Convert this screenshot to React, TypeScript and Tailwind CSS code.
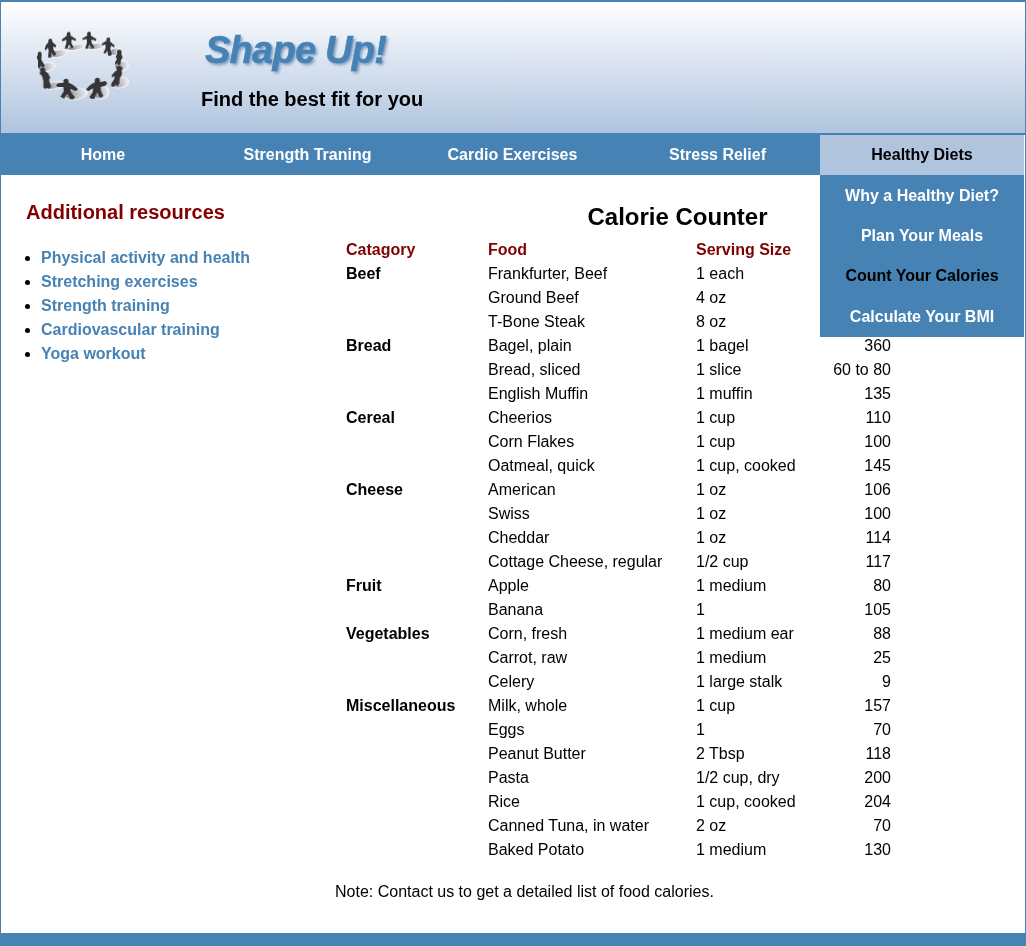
type Row = [string, string, string, string];

const rows: Row[] = [
  ["Beef", "Frankfurter, Beef", "1 each", ""],
  ["", "Ground Beef", "4 oz", ""],
  ["", "T-Bone Steak", "8 oz", ""],
  ["Bread", "Bagel, plain", "1 bagel", "360"],
  ["", "Bread, sliced", "1 slice", "60 to 80"],
  ["", "English Muffin", "1 muffin", "135"],
  ["Cereal", "Cheerios", "1 cup", "110"],
  ["", "Corn Flakes", "1 cup", "100"],
  ["", "Oatmeal, quick", "1 cup, cooked", "145"],
  ["Cheese", "American", "1 oz", "106"],
  ["", "Swiss", "1 oz", "100"],
  ["", "Cheddar", "1 oz", "114"],
  ["", "Cottage Cheese, regular", "1/2 cup", "117"],
  ["Fruit", "Apple", "1 medium", "80"],
  ["", "Banana", "1", "105"],
  ["Vegetables", "Corn, fresh", "1 medium ear", "88"],
  ["", "Carrot, raw", "1 medium", "25"],
  ["", "Celery", "1 large stalk", "9"],
  ["Miscellaneous", "Milk, whole", "1 cup", "157"],
  ["", "Eggs", "1", "70"],
  ["", "Peanut Butter", "2 Tbsp", "118"],
  ["", "Pasta", "1/2 cup, dry", "200"],
  ["", "Rice", "1 cup, cooked", "204"],
  ["", "Canned Tuna, in water", "2 oz", "70"],
  ["", "Baked Potato", "1 medium", "130"],
];

const resources = [
  "Physical activity and health",
  "Stretching exercises",
  "Strength training",
  "Cardiovascular training",
  "Yoga workout",
];

const navItems = ["Home", "Strength Traning", "Cardio Exercises", "Stress Relief"];
const dietItems = ["Why a Healthy Diet?", "Plan Your Meals", "Count Your Calories", "Calculate Your BMI"];

// Each figure of the ring: head centre and radii, then the body outline.
const figures: { head: [number, number, number, number]; body: string }[] = [
  { head: [59, 101, 6, 6], body: "M54 103L65 103L64 119L75 138L70 144L62 138L60 145L54 142L54 121L50 112Z" },
  { head: [91, 63, 6, 7], body: "M86 66L97 66L109 76L107 82L100 79L100 88L109 102L104 108L98 105L94 97L94 113L84 112L86 92L84 83L77 91L74 87L78 75Z" },
  { head: [146, 43, 6, 7], body: "M140 47L152 47L168 57L167 63L155 58L154 68L161 82L155 86L147 74L142 86L134 86L139 69L139 59L127 64L125 59Z" },
  { head: [207, 42, 6, 7], body: "M201 47L213 47L229 57L228 63L214 58L215 69L224 82L217 86L208 74L203 86L195 85L201 69L200 57L188 60L187 55Z" },
  { head: [265, 59, 6, 7], body: "M258 63L271 65L284 76L283 82L273 77L271 87L276 102L272 108L264 106L262 92L256 101L250 99L257 84L256 73L247 76L245 71Z" },
  { head: [298, 96, 7, 7], body: "M292 100L304 101L308 113L303 120L301 136L293 135L292 130L285 134L285 127L291 117L287 110Z" },
  { head: [68, 151, 8, 8], body: "M62 155L76 154L84 160L91 173L87 180L94 200L86 207L80 203L77 208L70 203L70 183L66 169L58 160Z" },
  { head: [138, 185, 8, 9], body: "M131 188L147 188L161 196L174 207L168 214L151 207L154 218L165 231L160 238L150 238L142 221L132 236L121 230L131 214L130 201L112 201L107 195L116 189Z" },
  { head: [232, 182, 8, 9], body: "M225 186L240 186L256 183L262 190L256 197L242 201L243 213L250 227L244 233L237 230L232 217L223 237L212 236L208 231L218 216L219 205L204 214L198 208L210 195Z" },
  { head: [298, 146, 9, 8], body: "M291 151L305 151L306 163L299 177L298 191L291 200L287 193L282 201L273 199L274 190L283 176L283 167L276 173L275 166L284 155Z" },
];

// Ground shadow beneath each figure: centre and radii.
const shadows: [number, number, number, number][] = [
  [80, 141, 25, 13], [115, 101, 27, 11], [168, 82, 27, 8], [229, 79, 27, 9],
  [286, 95, 19, 11], [305, 137, 21, 14], [105, 196, 29, 11], [168, 222, 34, 16],
  [243, 217, 24, 20], [301, 188, 25, 15],
];

function Logo() {
  return (
    <svg viewBox="0 0 375 285" className="h-[95px] w-[125px] shrink-0" aria-hidden="true">
      <defs>
        <linearGradient id="floor" x1="0" x2="1">
          <stop offset="0" stopColor="#66666a" />
          <stop offset="0.5" stopColor="#bdbdc4" />
          <stop offset="1" stopColor="#eeeef4" />
        </linearGradient>
        <filter id="rim"><feGaussianBlur stdDeviation="1" /></filter>
        <filter id="soft"><feGaussianBlur stdDeviation="0.8" /></filter>
      </defs>
      <g filter="url(#rim)">
        {shadows.map(([x, y, rx, ry], i) => (
          <ellipse key={i} cx={x} cy={y} rx={rx} ry={ry} fill="url(#floor)" stroke="#f4f6fb" strokeWidth="3" transform={`rotate(-10 ${x} ${y})`} />
        ))}
      </g>
      <g filter="url(#soft)" fill="#363637">
        {figures.map(({ head: [x, y, rx, ry], body }, i) => (
          <g key={i}>
            <path d={body} fill="none" stroke="#eceff5" strokeWidth="4" opacity="0.5" />
            <path d={body} />
            <ellipse cx={x} cy={y} rx={rx} ry={ry} />
          </g>
        ))}
      </g>
    </svg>
  );
}

export default function App() {
  return (
    <div className="flex h-[946px] flex-col overflow-hidden border-x border-t-2 border-[#4682b4] bg-white font-['Liberation_Sans',Arial,sans-serif] text-base text-black">
      <header className="flex h-[133px] shrink-0 border-b-2 border-[#4682b4] bg-linear-to-b from-white to-[#b0c4de] pt-[18px] pl-[19px]">
        <Logo />
        <div className="pl-[56px]">
          <h1 className="mt-[6px] pl-[4px] text-[38px] leading-[48px] font-bold tracking-[-0.75px] text-[#4682b4] italic [text-shadow:2px_2px_3px_#7898bd] [-webkit-text-stroke:0.5px_#4682b4]">Shape Up!</h1>
          <p className="mt-[13px] text-[20px] leading-6 font-bold">Find the best fit for you</p>
        </div>
      </header>

      <nav className="mr-px h-10 shrink-0 bg-[#4682b4] font-bold text-white">
        <ul className="grid h-full grid-cols-[204px_205px_205px_205px_204px] text-center leading-10">
          {navItems.map((item) => (
            <li key={item}><a href="#">{item}</a></li>
          ))}
          <li className="relative bg-[#b0c4de] text-black">
            <a href="#">Healthy Diets</a>
            <ul className="absolute top-full left-0 grid h-[162px] w-full grid-rows-[40px_40px_41px_41px] bg-[#4682b4] leading-[41px] text-white">
              {dietItems.map((item) => (
                <li key={item} className={item === "Count Your Calories" ? "text-black" : ""}><a href="#">{item}</a></li>
              ))}
            </ul>
          </li>
        </ul>
      </nav>

      <div className="flex min-h-0 flex-1">
        <aside className="w-[334px] shrink-0 pt-[25px] pl-[25px]">
          <h2 className="text-[20px] leading-6 font-bold text-[#800000]">Additional resources</h2>
          <ul className="mt-[22px] list-disc pl-[15px] leading-6">
            {resources.map((item) => (
              <li key={item}><a href="#" className="font-bold text-[#4682b4]">{item}</a></li>
            ))}
          </ul>
        </aside>

        <main className="pt-[28px]">
          <table className="ml-[10px] w-[665px] table-fixed border-collapse text-left leading-6">
            <caption className="h-[35px] text-[24px] leading-[28px] font-bold">Calorie Counter</caption>
            <colgroup>
              <col className="w-[142px]" />
              <col className="w-[209px]" />
              <col className="w-[115px]" />
              <col className="w-[80px]" />
              <col />
            </colgroup>
            <thead className="text-[#800000]">
              <tr>
                <th className="p-0 pl-px">Catagory</th>
                <th className="p-0 pl-px">Food</th>
                <th className="p-0">Serving Size</th>
                <th />
                <th />
              </tr>
            </thead>
            <tbody>
              {rows.map(([category, food, serving, calories]) => (
                <tr key={food}>
                  <td className="p-0 pl-px font-bold">{category}</td>
                  <td className="p-0 pl-px">{food}</td>
                  <td className="p-0">{serving}</td>
                  <td className="p-0 text-right">{calories}</td>
                  <td />
                </tr>
              ))}
            </tbody>
          </table>
          <p className="mt-[18px] leading-6">Note: Contact us to get a detailed list of food calories.</p>
        </main>
      </div>
      <footer className="h-[13px] shrink-0 bg-[#4682b4]" />
    </div>
  );
}
